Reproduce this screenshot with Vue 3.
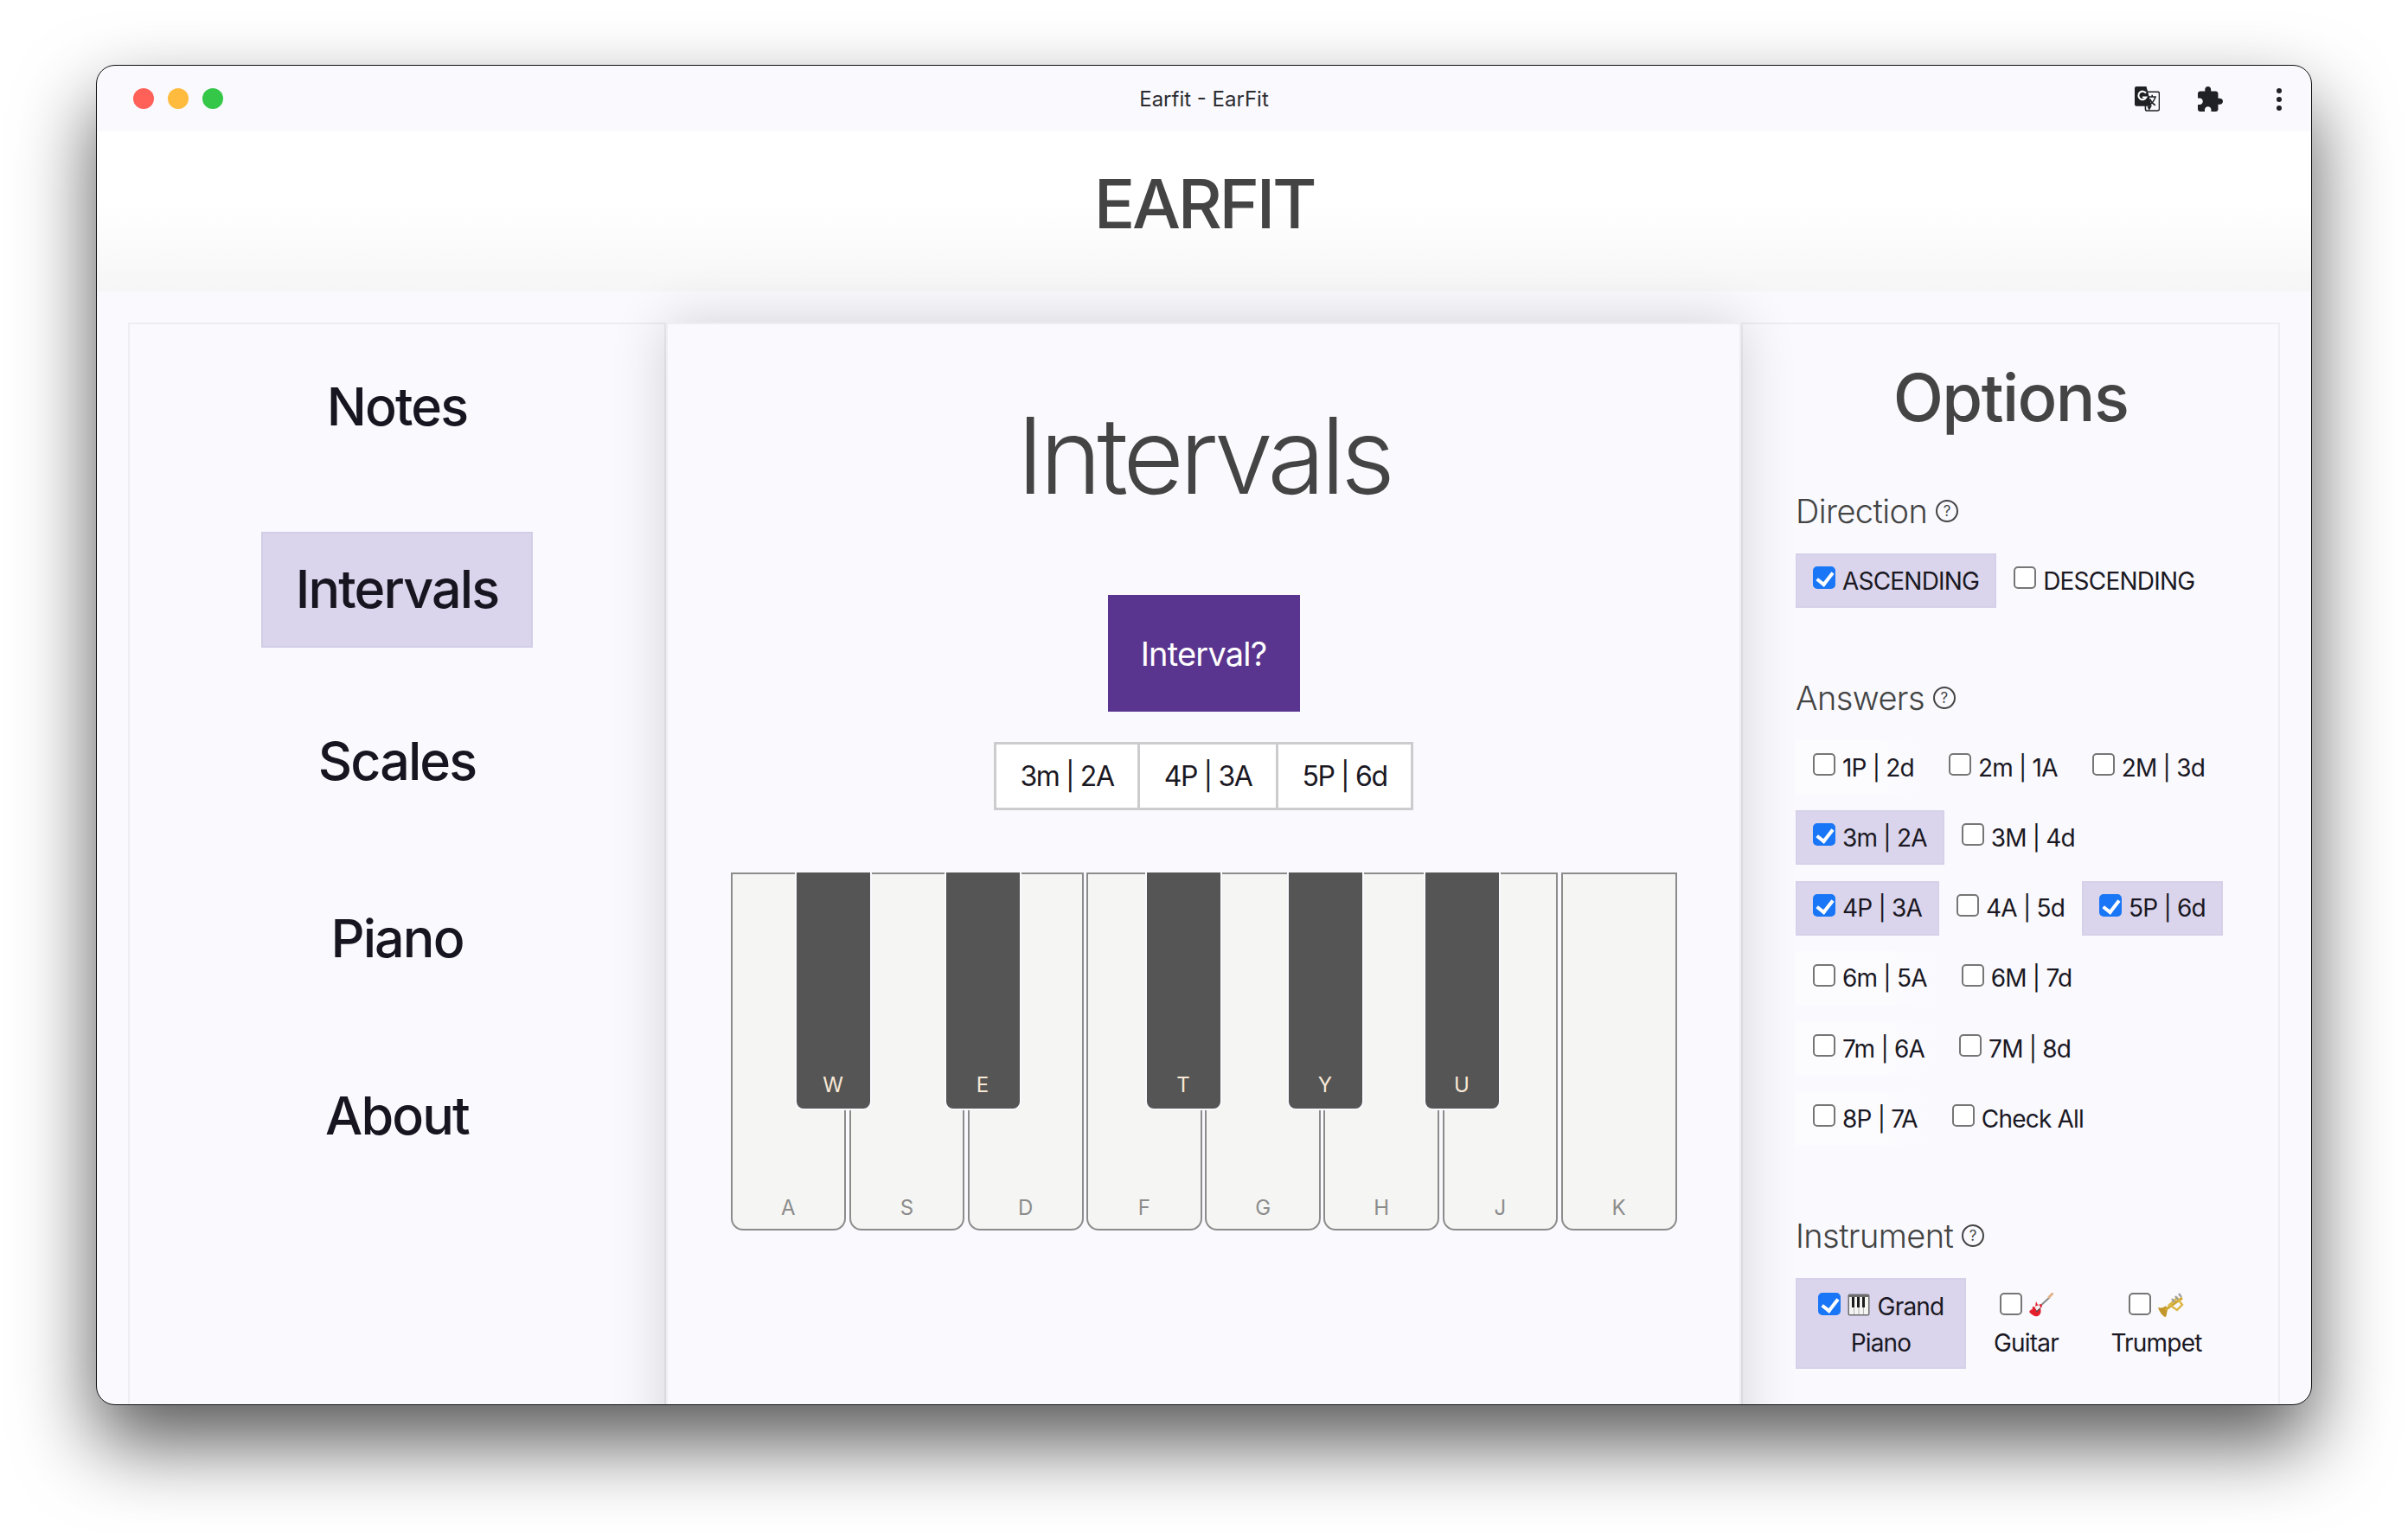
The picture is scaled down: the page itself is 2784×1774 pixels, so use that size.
<script setup>
const navItems = [
  { label: 'Notes' },
  { label: 'Intervals', active: true },
  { label: 'Scales' },
  { label: 'Piano' },
  { label: 'About' }
]
const direction = [
  { label: 'ASCENDING', on: true },
  { label: 'DESCENDING' }
]
const answerRows = [
  [{ label: '1P | 2d', faint: true }, { label: '2m | 1A' }, { label: '2M | 3d' }],
  [{ label: '3m | 2A', on: true }, { label: '3M | 4d' }],
  [{ label: '4P | 3A', on: true }, { label: '4A | 5d' }, { label: '5P | 6d', on: true }],
  [{ label: '6m | 5A', faint: true }, { label: '6M | 7d' }],
  [{ label: '7m | 6A', faint: true }, { label: '7M | 8d' }],
  [{ label: '8P | 7A', faint: true }, { label: 'Check All' }]
]
const selected = ['3m | 2A', '4P | 3A', '5P | 6d']
const whites = ['A', 'S', 'D', 'F', 'G', 'H', 'J', 'K']
const blacks = [
  { label: 'W', left: 74 },
  { label: 'E', left: 247 },
  { label: 'T', left: 479 },
  { label: 'Y', left: 643 },
  { label: 'U', left: 801 }
]
</script>

<template>
  <div class="window">
    <div class="titlebar">
      <div class="lights">
        <span class="light red"></span>
        <span class="light yellow"></span>
        <span class="light green"></span>
      </div>
      <div class="tab-title">Earfit - EarFit</div>
      <div class="tools">
        <svg class="tool" viewBox="0 0 28 28" width="29" height="29">
          <rect x="12" y="6" width="15.5" height="21" rx="2" fill="#f9f9fe" stroke="#202124" stroke-width="1.5" />
          <path d="M2 0h11l6 22H2a2 2 0 0 1-2-2V2a2 2 0 0 1 2-2z" fill="#202124" />
          <path d="M14 22l2 5 3-5z" fill="#202124" />
          <path d="M15 11.5h9M19.5 9.5v2M23 12c-1 4-4 7-7 9M17 14c1 3 3 5 6 7" fill="none" stroke="#202124" stroke-width="1.5" />
          <path d="M12.6 7.4A4.6 4.6 0 1 0 13 12H8.6" fill="none" stroke="#fff" stroke-width="2" />
        </svg>
        <svg class="tool" viewBox="2 1 21 21" width="29" height="29">
          <path fill="#202124" d="M20.5 11H19V7c0-1.1-.9-2-2-2h-4V3.5C13 2.12 11.88 1 10.5 1S8 2.12 8 3.5V5H4c-1.1 0-1.99.9-1.99 2v3.8H3.5c1.49 0 2.7 1.21 2.7 2.7s-1.21 2.7-2.7 2.7H2V20c0 1.1.9 2 2 2h3.8v-1.5c0-1.49 1.21-2.7 2.7-2.7 1.49 0 2.7 1.21 2.7 2.7V22H17c1.1 0 2-.9 2-2v-4h1.5c1.38 0 2.5-1.12 2.5-2.5S21.88 11 20.5 11z" />
        </svg>
        <div class="kebab"><i></i><i></i><i></i></div>
      </div>
    </div>

    <header class="header"><h1>EARFIT</h1></header>

    <main class="content">
      <nav class="panel nav">
        <a v-for="item in navItems" :key="item.label" class="nav-item" :class="{ active: item.active }">{{ item.label }}</a>
      </nav>

      <section class="panel center">
        <h2>Intervals</h2>
        <button class="ask">Interval?</button>
        <div class="answers">
          <div v-for="s in selected" :key="s" class="answer">{{ s }}</div>
        </div>
        <div class="keyboard">
          <div v-for="w in whites" :key="w" class="white"><span>{{ w }}</span></div>
          <div v-for="b in blacks" :key="b.label" class="black" :style="{ left: b.left + 'px' }"><span>{{ b.label }}</span></div>
        </div>
      </section>

      <aside class="panel options">
        <h3>Options</h3>

        <h4>Direction <span class="help">?</span></h4>
        <div class="row first">
          <label v-for="d in direction" :key="d.label" class="chip" :class="{ on: d.on }">
            <input type="checkbox" :checked="d.on" />{{ d.label }}
          </label>
        </div>

        <h4 class="later">Answers <span class="help">?</span></h4>
        <div class="rows">
          <div v-for="(row, i) in answerRows" :key="i" class="row">
            <label v-for="c in row" :key="c.label" class="chip" :class="{ on: c.on, faint: c.faint }">
              <input type="checkbox" :checked="c.on" />{{ c.label }}
            </label>
          </div>
        </div>

        <h4 class="later">Instrument <span class="help">?</span></h4>
        <div class="row first">
          <label class="chip inst on w-piano">
            <span class="inst-top">
              <input type="checkbox" checked />
              <svg class="emoji" viewBox="0 0 26 26" width="26" height="26">
                <rect x=".5" y=".5" width="25" height="25" rx="2" fill="#6d6d70" />
                <rect x="2" y="4" width="22" height="20" fill="#f4f4f2" />
                <path d="M5 4h3v12H5zM11 4h3v12h-3zM17 4h3v12h-3z" fill="#1c1c1e" />
                <path d="M7.500 16v8M13 16v8M18.500 16v8" stroke="#b5b5b5" stroke-width="1" />
              </svg>
              Grand
            </span>
            Piano
          </label>
          <label class="chip inst w-guitar">
            <span class="inst-top">
              <input type="checkbox" />
              <svg class="emoji" viewBox="0 0 28 28" width="28" height="28">
                <path d="M12 16L24 5" stroke="#8a8a8a" stroke-width="2" />
                <path d="M23 5l4-4" stroke="#e3b38a" stroke-width="3" stroke-linecap="round" />
                <path d="M8 10l2 4 4-1 1 3-2 2c1 3 1 7-3 9-3 1-7-1-10-5 1-2 3-3 4-3-1-2 0-3 1-3l2 0z" fill="#e5202c" />
                <path d="M6 16l6-2 1 3-4 4z" fill="#f2f2f2" />
                <path d="M8 22l5-4" stroke="#555" stroke-width="1.2" />
              </svg>
            </span>
            Guitar
          </label>
          <label class="chip inst w-trumpet">
            <span class="inst-top">
              <input type="checkbox" />
              <svg class="emoji" viewBox="0 0 30 30" width="30" height="30">
                <path d="M0 18c4 1 7 0 9-2l2 5c-1 3-1 6-2 8-3 0-7-5-9-11z" fill="#c2962a" />
                <path d="M8 21l20-14" fill="none" stroke="#d0a732" stroke-width="3" />
                <path d="M13 15l9 6 6-6-6-8z" fill="none" stroke="#dcb848" stroke-width="2.500" />
                <path d="M16 8l3 4M20 5l3 4M24 2l3 4" stroke="#9e9e9e" stroke-width="2.200" />
              </svg>
            </span>
            Trumpet
          </label>
        </div>
      </aside>
    </main>
  </div>
</template>

<style>
html, body { margin: 0; background: #fff; }
body { overflow: hidden; height: 1774px; }
</style>

<style scoped>
* { box-sizing: border-box; }
.window {
  width: 2562px;
  height: 1550px;
  margin: 75px 0 0 111px;
  background: #f9f9fe;
  border: 1px solid #111;
  border-radius: 22px;
  overflow: hidden;
  display: flex;
  flex-direction: column;
  font-family: Inter, "Liberation Sans", sans-serif;
  color: #1a1823;
  box-shadow: 0 44px 90px rgba(0, 0, 0, .65);
}
.titlebar {
  height: 76px;
  flex: none;
  display: flex;
  align-items: center;
  justify-content: center;
  position: relative;
}
.lights { position: absolute; left: 42px; top: 26px; display: flex; gap: 16px; }
.light { width: 24px; height: 24px; border-radius: 50%; }
.red { background: #ff6159; }
.yellow { background: #ffbb3e; }
.green { background: #34c748; }
.tab-title { font-size: 24px; color: #2b2b30; letter-spacing: 0; }
.tools { position: absolute; right: 34px; top: 24px; display: flex; align-items: center; gap: 44px; }
.tool { display: block; }
.kebab { display: flex; flex-direction: column; gap: 4px; width: 6px; margin-left: 18px; }
.kebab i { width: 6px; height: 6px; background: #202124; border-radius: 50%; }
.header {
  height: 185px;
  flex: none;
  display: flex;
  align-items: center;
  justify-content: center;
  padding-bottom: 18px;
  background: linear-gradient(#fff 0%, #fff 45%, #f6f6f6 100%);
}
h1 { margin: 0; font-size: 79px; font-weight: 550; letter-spacing: -3.3px; color: #444; line-height: 1; }
.content {
  flex: 1;
  min-height: 0;
  margin: 36px 37px 0 36px;
  display: grid;
  grid-template-columns: 622px 1243px 623px;
}
.panel { border: 2px solid #eeeef2; border-bottom: 0; height: 1400px; }
.nav {
  display: flex;
  flex-direction: column;
  align-items: center;
  gap: 72px;
  padding-top: 28px;
}
.nav-item {
  width: 314px;
  height: 133px;
  display: flex;
  align-items: center;
  justify-content: center;
  flex: none;
  font-size: 61px;
  font-weight: 550;
  letter-spacing: -1.9px;
  color: #17151f;
}
.nav-item.active {
  height: 134px;
  padding-bottom: 2px;
  background: #dad5ec;
  border: 2px solid #d2cde6;
  margin-top: 7px;
  margin-bottom: -8px;
}
.center {
  position: relative;
  z-index: 1;
  display: flex;
  flex-direction: column;
  align-items: center;
  padding-top: 77px;
  background: #f9f9fe;
  box-shadow: 0 0 60px rgba(0, 0, 0, .16);
}
h2 { margin: 0; font-size: 122px; line-height: 150px; font-weight: 300; letter-spacing: -5.400px; color: #444; }
.ask {
  margin-top: 86px;
  width: 222px;
  height: 135px;
  border: 0;
  background: #5a358f;
  color: #fff;
  font: 400 38px Inter, "Liberation Sans", sans-serif;
  letter-spacing: -.8px;
}
.answers { margin-top: 35px; display: flex; background: #fff; border: 3px solid #cccccf; height: 79px; }
.answer {
  display: flex;
  align-items: center;
  padding: 0 27.5px;
  font-size: 32px;
  letter-spacing: -1.4px;
  border-left: 3px solid #cccccf;
}
.answer:first-child { border-left: 0; }
.keyboard {
  position: relative;
  margin-top: 72px;
  display: flex;
  gap: 3.5px;
  width: 1094px;
  height: 414px;
}
.white {
  flex: 1;
  background: #f5f5f3;
  border: 2.500px solid #8c8c8c;
  border-radius: 0 0 14px 14px;
  display: flex;
  align-items: flex-end;
  justify-content: center;
  padding-bottom: 10px;
  font-size: 24px;
  color: #8c8c8c;
}
.black {
  position: absolute;
  top: 0;
  width: 89px;
  height: 275px;
  background: #555;
  border: 2px solid #f9f9fe;
  border-top: 0;
  border-radius: 0 0 10px 10px;
  display: flex;
  align-items: flex-end;
  justify-content: center;
  padding-bottom: 13px;
  font-size: 24px;
  color: #f8e8d6;
}
.options { padding: 39px 0 0 61px; background: #f9f9fe; }
h3 { margin: 0 0 62px; font-size: 76px; line-height: 90px; font-weight: 550; letter-spacing: -1.6px; color: #444; text-align: center; padding-right: 61px; }
h4 {
  margin: 0;
  font-size: 38px;
  line-height: 50px;
  font-weight: 300;
  letter-spacing: -.6px;
  color: #444;
  display: flex;
  align-items: center;
  gap: 4px;
}
h4.later { margin-top: 79px; }
.help {
  width: 26px;
  height: 26px;
  margin-left: 6px;
  border: 2px solid #444;
  border-radius: 50%;
  font-size: 17px;
  font-weight: 400;
  letter-spacing: 0;
  line-height: 1;
  display: flex;
  align-items: center;
  justify-content: center;
}
.rows { margin-top: 24px; display: flex; flex-direction: column; gap: 18.25px; }
.row { display: flex; }
.row.first { margin-top: 24px; }
.chip {
  height: 63px;
  display: inline-flex;
  align-items: center;
  padding: 0 20px;
  font-size: 28px;
  letter-spacing: -.8px;
  color: #1a1823;
  white-space: nowrap;
}
.chip.on { background: #dad5ec; border: 2px solid #d6d1e9; padding: 0 18px; }
.chip.faint { background: linear-gradient(90deg, #fcfcff, #fcfcff 60%, #f9f9fe); }
input {
  appearance: none;
  -webkit-appearance: none;
  flex: none;
  width: 26px;
  height: 26px;
  margin: -7px 8px 0 0;
  background: #fff;
  border: 2px solid #767676;
  border-radius: 5px;
  position: relative;
}
input:checked { background: #1976f6; border-color: #1976f6; }
input:checked::after {
  content: "";
  position: absolute;
  left: 6px;
  top: 1px;
  width: 8px;
  height: 15px;
  border: solid #fff;
  border-width: 0 4px 4px 0;
  transform: rotate(38deg);
}
.inst {
  height: 105px;
  display: block;
  padding: 0;
  text-align: center;
  white-space: normal;
  line-height: 42px;
  padding-top: 12px;
}
.chip.inst.on { padding: 10px 0 0; border: 2px solid #d6d1e9; }
.inst-top { display: flex; align-items: center; justify-content: center; gap: 0; height: 42px; }
.inst-top input { margin: -7px 8px 0 0; }
.emoji { margin-right: 9px; flex: none; margin-top: -4px; }
.w-piano { width: 197px; }
.w-guitar { width: 139px; }
.w-trumpet { width: 162px; }
.w-guitar .emoji, .w-trumpet .emoji { margin-right: 0; }
</style>
